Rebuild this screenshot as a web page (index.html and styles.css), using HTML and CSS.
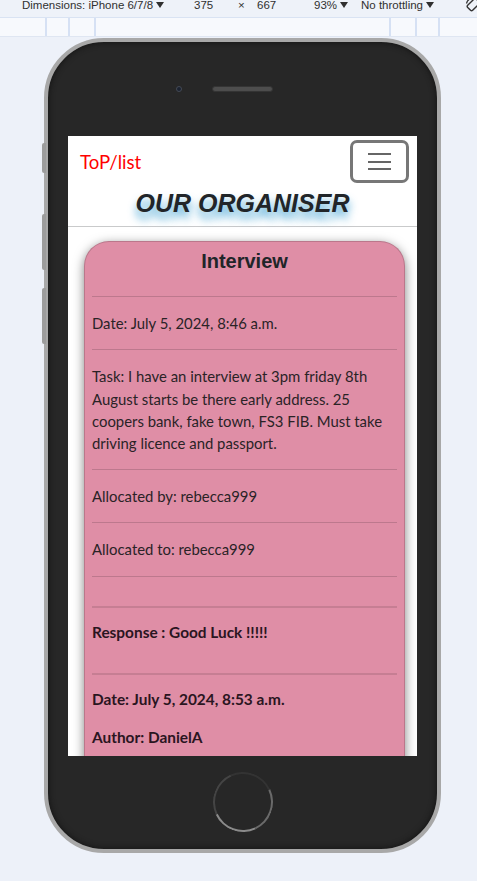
FILE: index.html
```html
<!DOCTYPE html>
<html lang="en">
<head>
<meta charset="utf-8">
<title>ToP/list - Device preview</title>
<link rel="stylesheet" href="styles.css">
</head>
<body>
<div class="toolbar">
  <span class="tb-item tb-device">Dimensions: iPhone 6/7/8<i class="caret"></i></span>
  <span class="tb-item tb-w">375</span>
  <span class="tb-item tb-x">×</span>
  <span class="tb-item tb-h">667</span>
  <span class="tb-item tb-zoom">93%<i class="caret"></i></span>
  <span class="tb-item tb-throttle">No throttling<i class="caret"></i></span>
  <span class="tb-item tb-rotate">
    <svg width="16" height="16" viewBox="0 0 16 16" aria-hidden="true">
      <rect x="4.5" y="1.5" width="7" height="12" rx="1.5" transform="rotate(45 8 8)" fill="none" stroke="#333" stroke-width="1.4"/>
      <path d="M1.5 6.5 A6.5 6.5 0 0 1 6.5 1.5" fill="none" stroke="#333" stroke-width="1.2"/>
    </svg>
  </span>
</div>
<div class="ruler">
  <span class="rc rc1"></span><span class="rc rc2"></span><span class="rc rc3"></span><span class="rc rc4"></span><span class="rc rc5"></span><span class="rc rc6"></span><span class="rc rc7"></span>
</div>

<div class="phone">
  <span class="side-btn side-btn-1"></span>
  <span class="side-btn side-btn-2"></span>
  <span class="side-btn side-btn-3"></span>
  <div class="sensors">
    <span class="camera"></span>
    <span class="speaker"></span>
  </div>
  <div class="screen">
    <header class="site-header">
      <nav class="navbar">
        <a class="brand">ToP/list</a>
        <button class="toggler" type="button" aria-label="Toggle navigation">
          <span class="bar"></span><span class="bar"></span><span class="bar"></span>
        </button>
      </nav>
      <h1 class="site-title">OUR ORGANISER</h1>
    </header>
    <main class="content">
      <article class="card">
        <h2 class="card-title">Interview</h2>
        <hr>
        <p>Date: July 5, 2024, 8:46 a.m.</p>
        <hr>
        <p>Task: I have an interview at 3pm friday 8th August starts be there early address. 25 coopers bank, fake town, FS3 FIB. Must take driving licence and passport.</p>
        <hr>
        <p>Allocated by: rebecca999</p>
        <hr>
        <p>Allocated to: rebecca999</p>
        <hr>
        <section class="responses">
          <hr class="thick">
          <p class="strong resp">Response : Good Luck !!!!!</p>
          <hr class="thick">
          <p class="strong resp-date">Date: July 5, 2024, 8:53 a.m.</p>
          <p class="strong resp-author">Author: DanielA</p>
        </section>
      </article>
    </main>
  </div>
  <div class="home"></div>
</div>
</body>
</html>
```

FILE: styles.css
```css
html, body {
  margin: 0;
  padding: 0;
}

body {
  background: #edf1f9;
  font-family: "Liberation Sans", Arial, sans-serif;
  width: 477px;
  height: 881px;
  overflow: hidden;
}

/* ---------- devtools toolbar ---------- */
.toolbar {
  display: flex;
  height: 17px;
  background: #eef2f9;
  font-size: 11.5px;
  line-height: 10px;
  color: #303030;
  white-space: nowrap;
}

.tb-item { flex: none; }
.tb-device { padding-left: 22px; width: 194px; box-sizing: border-box; }
.tb-w { width: 44px; }
.tb-x { width: 19px; }
.tb-h { width: 57px; }
.tb-zoom { width: 47px; }
.tb-throttle { width: 104px; }
.tb-rotate { width: 16px; margin-top: -3px; }

.caret {
  display: inline-block;
  width: 0;
  height: 0;
  margin-left: 3px;
  border-left: 4px solid transparent;
  border-right: 4px solid transparent;
  border-top: 6px solid #303030;
  vertical-align: 1px;
}

.ruler {
  display: flex;
  height: 18px;
  background: #f7f9fd;
  border-top: 1px solid #d9e3f3;
  border-bottom: 1px solid #dfe6f2;
}

.rc { height: 100%; border-right: 2px solid #d6e1f4; }
.rc1 { width: 45px; }
.rc2 { width: 21px; }
.rc3 { width: 24px; }
.rc4 { width: 293px; }
.rc5 { width: 24px; }
.rc6 { width: 21px; }
.rc7 { flex: 1; border-right: 0; }

/* ---------- phone frame ---------- */
.phone {
  position: relative;
  box-sizing: border-box;
  width: 397px;
  height: 815px;
  margin: 1px 0 0 44px;
  border: 4px solid #a8a8a8;
  border-radius: 60px;
  background: #272727;
  box-shadow: inset 0 0 6px #111;
}

.side-btn {
  position: absolute;
  left: -6px;
  width: 4px;
  background: #9c9c9c;
  border-radius: 2px 0 0 2px;
}
.side-btn-1 { top: 101px; height: 30px; }
.side-btn-2 { top: 172px; height: 56px; }
.side-btn-3 { top: 246px; height: 56px; }

.sensors {
  display: flex;
  align-items: center;
  gap: 30px;
  height: 6px;
  padding: 44px 0 0 128px;
}

.camera {
  width: 6px;
  height: 6px;
  box-sizing: border-box;
  border-radius: 50%;
  background: #1b2230;
  border: 1px solid #444a55;
}

.speaker {
  width: 61px;
  height: 6px;
  box-sizing: border-box;
  border-radius: 3px;
  background: #4d4d4d;
  border: 1px solid #343434;
}

.home {
  box-sizing: border-box;
  width: 60px;
  height: 60px;
  margin: 16px auto 0;
  border-radius: 50%;
  border: 2px solid;
  border-color: #333 #6a6a6a #8a8a8a #444;
  transform: rotate(20deg);
}

/* ---------- screen ---------- */
.screen {
  width: 349px;
  height: 620px;
  margin: 44px auto 0;
  background: #fff;
  overflow: hidden;
  font-family: Lato, "Open Sans", sans-serif;
  color: #212529;
}

.site-header {
  border-bottom: 1px solid #c9cacb;
  padding-bottom: 8px;
}

.navbar {
  display: flex;
  justify-content: space-between;
  align-items: flex-start;
  padding: 4px 8px 0 12px;
}

.brand {
  margin-top: 11px;
  font-size: 18.6px;
  line-height: 22px;
  color: #f00;
}

.toggler {
  box-sizing: border-box;
  width: 59px;
  height: 43px;
  padding: 0;
  border: 3.5px solid #777;
  border-radius: 7px;
  background: #fff;
  display: flex;
  flex-direction: column;
  justify-content: center;
  align-items: center;
  gap: 5.6px;
}

.bar {
  display: block;
  width: 23px;
  height: 2px;
  background: #666;
}

.site-title {
  margin: 5px 0 0;
  text-align: center;
  font-family: "Liberation Sans", Arial, sans-serif;
  font-size: 25px;
  font-weight: bold;
  font-style: italic;
  line-height: 30px;
  color: #212529;
  text-shadow: 0 7px 9px rgba(20, 140, 200, 0.75);
}

.content {
  padding: 14px 12px 0 16px;
}

.card {
  background: #df8ea6;
  border: 1px solid rgba(0, 0, 0, 0.16);
  border-radius: 25px 25px 0 0;
  box-shadow: 0 3px 11px rgba(0, 0, 0, 0.5);
  padding: 7px 7px 20px;
  font-size: 14.88px;
  line-height: 22.3px;
  color: #2a2326;
}

.card-title {
  margin: 0 0 23.3px;
  text-align: center;
  font-family: "Liberation Sans", Arial, sans-serif;
  font-size: 20px;
  font-weight: bold;
  line-height: 24px;
  color: #212529;
}

.card hr {
  margin: 0;
  border: 0;
  height: 1px;
  background: rgba(0, 0, 0, 0.15);
}

.card p {
  margin: 14.9px 0;
}

.responses {
  margin-top: 29.4px;
}

.card hr.thick {
  height: 2px;
  background: rgba(0, 0, 0, 0.11);
}

.card p.strong {
  font-weight: bold;
  font-size: 15.4px;
  color: #2a1521;
}

.card p.resp { margin: 13.1px 0 30.2px; }
.card p.resp-date { margin: 12.8px 0 15.4px; }
.card p.resp-author { margin: 0; }
```
